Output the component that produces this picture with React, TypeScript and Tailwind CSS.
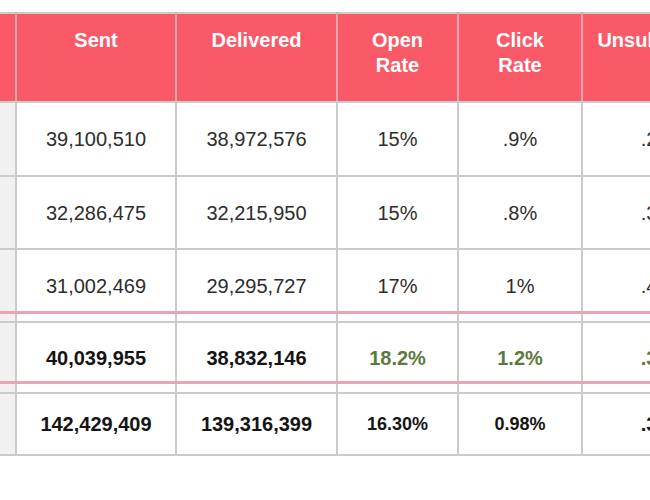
import React from "react";

type Row = {
  sent: string;
  delivered: string;
  open: string;
  click: string;
  unsub: string;
  kind: "normal" | "highlight" | "total";
  h: string;
};

const rows: Row[] = [
  { sent: "39,100,510", delivered: "38,972,576", open: "15%", click: ".9%", unsub: ".2%", kind: "normal", h: "h-[74px]" },
  { sent: "32,286,475", delivered: "32,215,950", open: "15%", click: ".8%", unsub: ".3%", kind: "normal", h: "h-[73px]" },
  { sent: "31,002,469", delivered: "29,295,727", open: "17%", click: "1%", unsub: ".4%", kind: "normal", h: "h-[73px]" },
  { sent: "40,039,955", delivered: "38,832,146", open: "18.2%", click: "1.2%", unsub: ".3%", kind: "highlight", h: "h-[71px]" },
  { sent: "142,429,409", delivered: "139,316,399", open: "16.30%", click: "0.98%", unsub: ".3%", kind: "total", h: "h-[62px]" },
];

const cell = "border-2 border-[#cbcbcb] text-center align-middle p-0";

export default function App() {
  return (
    <div className="w-[650px] h-[500px] bg-white overflow-hidden pt-[12px] font-['Liberation_Sans',Arial,sans-serif]">
      <div className="relative w-[737px] -ml-[4px]">
        <table className="table-fixed border-collapse w-[737px] text-[20px]">
          <colgroup>
            <col className="w-[19px]" />
            <col className="w-[160px]" />
            <col className="w-[161px]" />
            <col className="w-[121px]" />
            <col className="w-[124px]" />
            <col className="w-[152px]" />
          </colgroup>
          <thead>
            <tr className="h-[89px] bg-[#fa5a68] text-white font-bold leading-[25px]">
              <th className="border-2 border-[#cbcbcb] border-r-[#d9a9ad] p-0"></th>
              {["Sent", "Delivered", "Open Rate", "Click Rate", "Unsubscribe"].map((t) => (
                <th
                  key={t}
                  className="border-2 border-[#cbcbcb] border-x-[#d9a9ad] align-top pt-[14px] px-3 font-bold"
                >
                  {t.includes("Rate") ? (
                    <>
                      {t.split(" ")[0]}
                      <br />
                      Rate
                    </>
                  ) : (
                    t
                  )}
                </th>
              ))}
            </tr>
          </thead>
          <tbody>
            {rows.map((r, i) => {
              const base =
                r.kind === "normal"
                  ? "text-[#2d2d2d] font-normal"
                  : "text-[#151515] font-bold";
              const pct =
                r.kind === "highlight"
                  ? "text-[#5d7a3e] font-bold"
                  : r.kind === "total"
                  ? "text-[#151515] font-bold text-[18px]"
                  : base;
              return (
                <tr key={i} className={r.h}>
                  <td className={`${cell} bg-[#f1f1f1]`}></td>
                  <td className={`${cell} ${base}`}>{r.sent}</td>
                  <td className={`${cell} ${base}`}>{r.delivered}</td>
                  <td className={`${cell} ${pct}`}>{r.open}</td>
                  <td className={`${cell} ${pct}`}>{r.click}</td>
                  <td className={`${cell} ${r.kind === "highlight" ? "text-[#5d7a3e] font-bold" : base}`}>
                    {r.unsub}
                  </td>
                </tr>
              );
            })}
          </tbody>
        </table>
        {/* pink highlight box over the 4th row */}
        <div className="absolute left-0 right-0 top-[299px] h-[73px] border-y-[3px] border-[#eea2b4] pointer-events-none" />
      </div>
    </div>
  );
}
